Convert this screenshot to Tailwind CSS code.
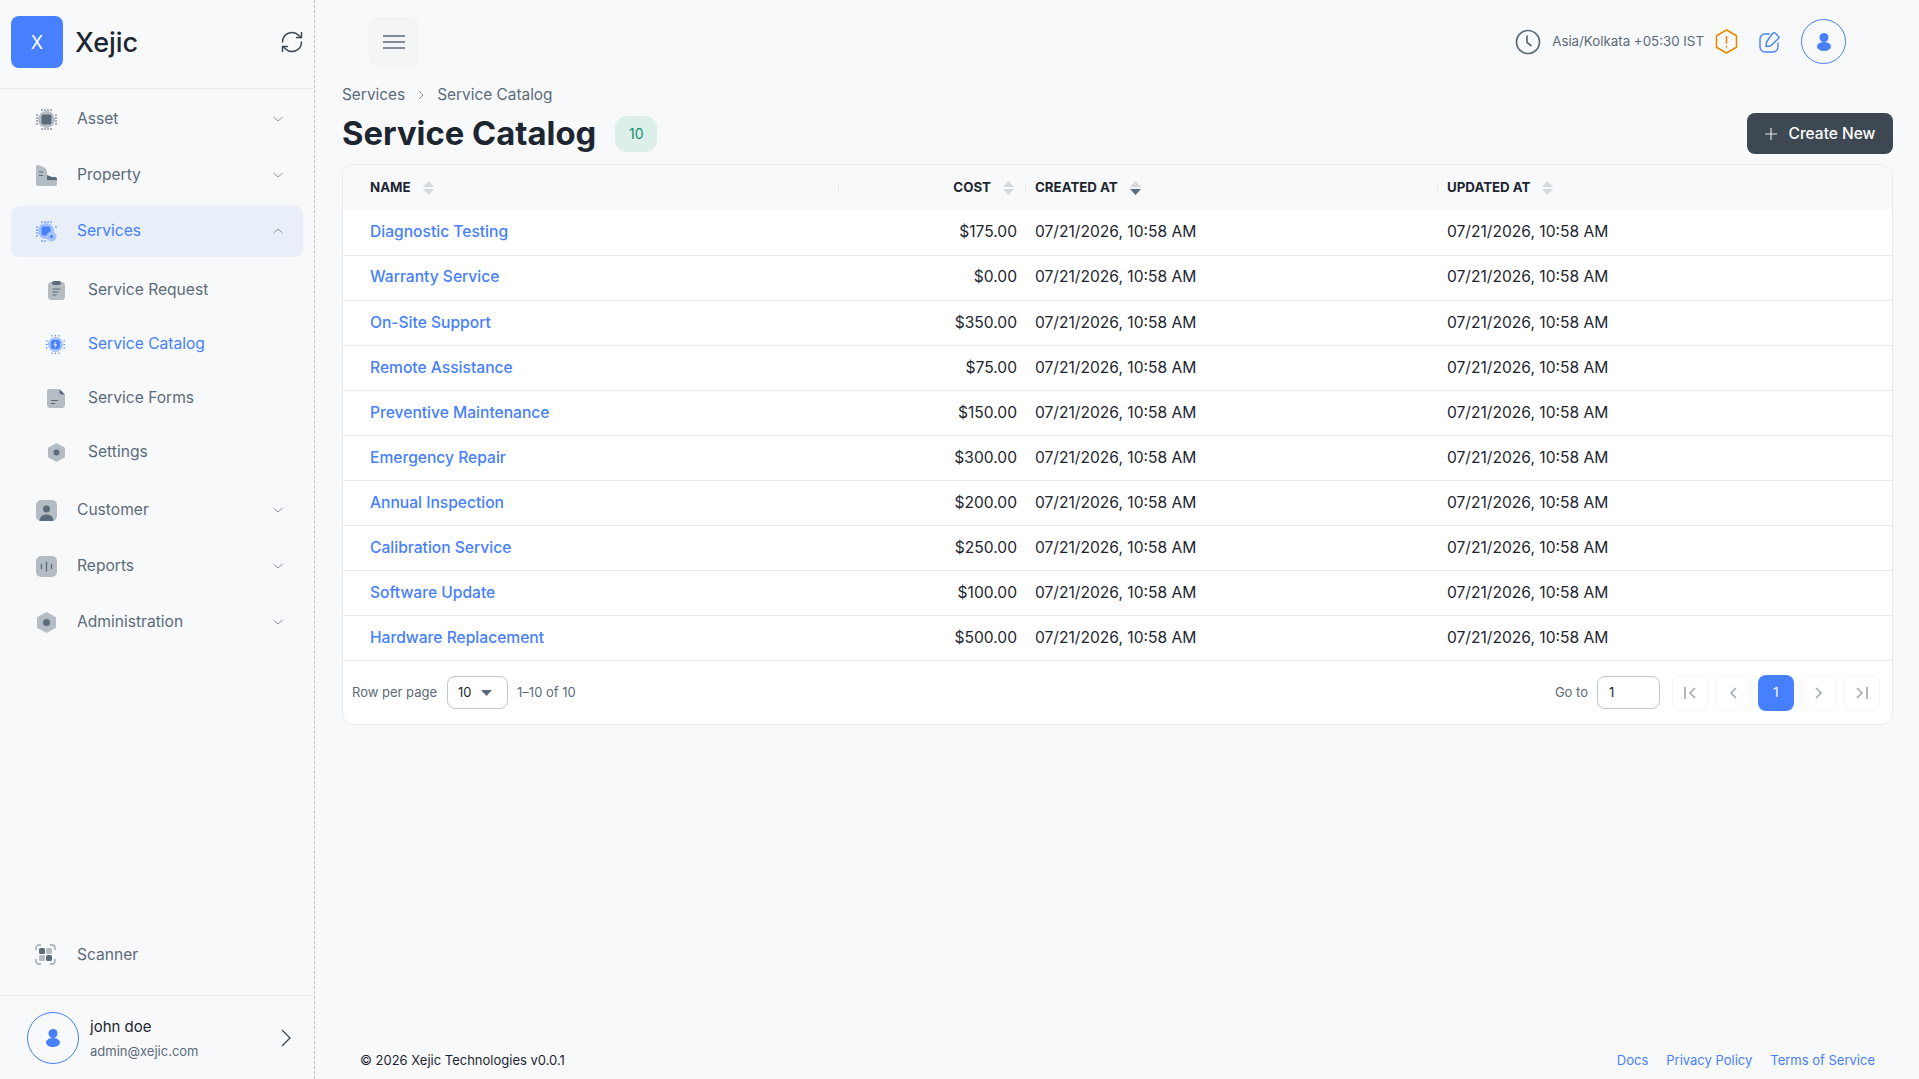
<!DOCTYPE html>
<html lang="en">
<head>
  <meta charset="UTF-8">
  <meta name="viewport" content="width=device-width, initial-scale=1.0">
  <title>Xejic - Service Catalog</title>
  <script src="https://cdn.jsdelivr.net/npm/@tailwindcss/browser@4"></script>
</head>
<body class="bg-[#f8f9fb] text-[#1d2630] font-[Inter,sans-serif] h-screen overflow-hidden flex">
  <!-- sidebar -->
  <aside class="w-[315px] h-screen flex flex-col shrink-0 border-r border-dashed border-[#bec4ca]">
    <div class="h-[89px] shrink-0 flex items-center pl-[11px] pr-[10px] pb-[4px] border-b border-[#e7eaee]">
      <div class="w-[52px] h-[52px] rounded-lg bg-[#4680ff] text-white flex items-center justify-center text-[18px]">X</div>
      <span class="ml-3 text-[27px] leading-none font-medium">Xejic</span>
      <svg class="ml-auto w-[24px] h-[24px] text-[#3e4853]" viewBox="0 0 24 24" fill="none" stroke="currentColor" stroke-width="1.5" stroke-linecap="round" stroke-linejoin="round"><path d="M2.5 12a9.5 9.5 0 0 1 16.2-6.7L21 7.5"/><path d="M21.500 2.500v5h-5"/><path d="M21.500 12a9.500 9.500 0 0 1-16.200 6.700L3 16.500"/><path d="M2.500 21.500v-5h5"/></svg>
    </div>
    <nav class="px-[11px] pt-[5px] flex flex-col gap-[5px] text-[#5b6b79] text-[15.6px]">
      <a class="h-[51px] flex items-center pl-[25px] pr-[19px] pb-[1px]">
        <svg class="w-[21px] h-[21px] mr-[20px]" viewBox="0 0 21 21"><circle cx="10.500" cy="10.500" r="8.500" fill="#b4bcc4"/><rect x="5.500" y="5.500" width="10" height="10" rx="2" fill="#5b6b79"/><path d="M6 0v2M9 0v2M12 0v2M15 0v2M6 19v2M9 19v2M12 19v2M15 19v2M0 6h2M0 9h2M0 12h2M0 15h2M19 6h2M19 9h2M19 12h2M19 15h2" stroke="#5b6b79" stroke-width="1"/></svg>
        Asset
        <svg class="ml-auto w-[12px] h-[12px] text-[#8996a4]" viewBox="0 0 12 12" fill="none" stroke="currentColor"><path d="M1.500 4l4.500 4 4.500-4"/></svg>
      </a>
      <a class="h-[51px] flex items-center pl-[25px] pr-[19px] pb-[1px]">
        <svg class="w-[21px] h-[21px] mr-[20px]" viewBox="0 0 21 21"><path d="M0 2a2 2 0 0 1 2.500-2C6 1 11 3 11 7v14H2a2 2 0 0 1-2-2z" fill="#b4bcc4"/><path d="M3 7h4M3 10.500h4" stroke="#5b6b79" stroke-width="1.200"/><path d="M11 10l5 2 3 0a2 2 0 0 1 2 2v1.500H11z" fill="#5b6b79"/><path d="M11 15.500h10V19a2 2 0 0 1-2 2h-8z" fill="#b4bcc4"/></svg>
        Property
        <svg class="ml-auto w-[12px] h-[12px] text-[#8996a4]" viewBox="0 0 12 12" fill="none" stroke="currentColor"><path d="M1.500 4l4.500 4 4.500-4"/></svg>
      </a>
      <a class="h-[51px] flex items-center pl-[25px] pr-[19px] pb-[1px] rounded-lg bg-[#e9eff9] text-[#4680ff]">
        <svg class="w-[21px] h-[21px] mr-[20px]" viewBox="0 0 21 21"><circle cx="10" cy="10" r="8" fill="#a3c0ff"/><path d="M5.500 7.500a2 2 0 0 1 2-2h5a2 2 0 0 1 2 2v3l-3 4h-4a2 2 0 0 1-2-2z" fill="#4680ff"/><path d="M6 0v2M9 0v2M12 0v2M15 0v2M6 19v2M9 19v2M0 6h2M0 9h2M0 12h2M0 15h2M19 6h2" stroke="#4680ff" stroke-width="1"/><circle cx="15.500" cy="15.500" r="5" fill="#a3c0ff"/><circle cx="15.500" cy="15.500" r="1.500" fill="#4680ff"/></svg>
        Services
        <svg class="ml-auto w-[12px] h-[12px] text-[#8996a4]" viewBox="0 0 12 12" fill="none" stroke="currentColor"><path d="M1.500 8l4.500-4 4.500 4"/></svg>
      </a>
      <div class="flex flex-col my-[1px]">
        <a class="h-[54px] flex items-center pl-[37px]">
          <svg class="w-[17px] h-[19px] mr-[23px]" viewBox="0 0 17 19"><rect y="1" width="17" height="18" rx="3.500" fill="#b4bcc4"/><rect x="4" y="0" width="9" height="4" rx="2" fill="#5b6b79"/><path d="M4.500 8h8M4.500 11h6M4.500 14h4" stroke="#5b6b79" stroke-width="1.200"/></svg>
          Service Request
        </a>
        <a class="h-[54px] flex items-center pl-[35px] text-[#4680ff]">
          <svg class="w-[19px] h-[19px] mr-[23px]" viewBox="0 0 19 19"><circle cx="9.500" cy="9.500" r="7.500" fill="#a3c0ff"/><rect x="5" y="5" width="9" height="9" rx="2.500" fill="#4680ff"/><path d="M10 6.800l-2 3h2.500l-1.500 2.500" stroke="#fff" stroke-width="1" fill="none"/><path d="M6 0v1.500M9.500 0v1.500M13 0v1.500M6 17.500V19M9.500 17.500V19M13 17.500V19M0 6h1.500M0 9.500h1.500M0 13h1.500M17.500 6H19M17.500 9.500H19M17.500 13H19" stroke="#4680ff" stroke-width="1"/></svg>
          Service Catalog
        </a>
        <a class="h-[54px] flex items-center pl-[36px]">
          <svg class="w-[18px] h-[19px] mr-[23px]" viewBox="0 0 18 19"><path d="M3 0h9l6 6v10a3 3 0 0 1-3 3H3a3 3 0 0 1-3-3V3a3 3 0 0 1 3-3z" fill="#b4bcc4"/><path d="M12.500 0L18 5.500h-3.500a2 2 0 0 1-2-2z" fill="#5b6b79"/><path d="M4 11.500h7M4 14.500h4" stroke="#5b6b79" stroke-width="1.200"/></svg>
          Service Forms
        </a>
        <a class="h-[54px] flex items-center pl-[37px]">
          <svg class="w-[17px] h-[19px] mr-[23px]" viewBox="0 0 17 19"><path d="M8.500 0l8.500 4.800v9.400L8.500 19 0 14.200V4.800z" fill="#b4bcc4"/><circle cx="8.500" cy="9.500" r="3" fill="#5b6b79"/></svg>
          Settings
        </a>
      </div>
      <a class="h-[51px] flex items-center pl-[25px] pr-[19px] pb-[1px]">
        <svg class="w-[21px] h-[21px] mr-[20px]" viewBox="0 0 21 21"><rect width="21" height="21" rx="5" fill="#b4bcc4"/><circle cx="10.500" cy="9" r="3.500" fill="#5b6b79"/><path d="M3.500 21c0-4 3-6.500 7-6.500s7 2.500 7 6.500z" fill="#5b6b79"/></svg>
        Customer
        <svg class="ml-auto w-[12px] h-[12px] text-[#8996a4]" viewBox="0 0 12 12" fill="none" stroke="currentColor"><path d="M1.500 4l4.500 4 4.500-4"/></svg>
      </a>
      <a class="h-[51px] flex items-center pl-[25px] pr-[19px] pb-[1px]">
        <svg class="w-[21px] h-[21px] mr-[20px]" viewBox="0 0 21 21"><rect width="21" height="21" rx="5" fill="#b4bcc4"/><path d="M5.500 8.500v4M10.500 6v9M15.500 8.500v4" stroke="#5b6b79" stroke-width="1.300" stroke-linecap="round"/></svg>
        Reports
        <svg class="ml-auto w-[12px] h-[12px] text-[#8996a4]" viewBox="0 0 12 12" fill="none" stroke="currentColor"><path d="M1.500 4l4.500 4 4.500-4"/></svg>
      </a>
      <a class="h-[51px] flex items-center pl-[25px] pr-[19px] pb-[1px]">
        <svg class="w-[21px] h-[21px] mr-[20px]" viewBox="0 0 21 21"><path d="M10.500 0l9.500 5.300v10.400L10.500 21 1 15.700V5.300z" fill="#b4bcc4"/><circle cx="10.500" cy="10.500" r="3.500" fill="#5b6b79"/></svg>
        Administration
        <svg class="ml-auto w-[12px] h-[12px] text-[#8996a4]" viewBox="0 0 12 12" fill="none" stroke="currentColor"><path d="M1.500 4l4.500 4 4.500-4"/></svg>
      </a>
    </nav>
    <a class="mt-auto h-[51px] flex items-center pl-[35px] text-[#5b6b79] text-[15.6px] mb-[15px]">
      <svg class="w-[21px] h-[21px] mr-[21px]" viewBox="0 0 21 21"><path d="M1 6V4a3 3 0 0 1 3-3h2M15 1h2a3 3 0 0 1 3 3v2M20 15v2a3 3 0 0 1-3 3h-2M6 20H4a3 3 0 0 1-3-3v-2" fill="none" stroke="#9aa4ae" stroke-width="1.400"/><rect x="4" y="4" width="6" height="6" rx="1.500" fill="#5b6b79"/><rect x="11" y="4" width="6" height="6" rx="1.500" fill="#b4bcc4"/><rect x="4" y="11" width="6" height="6" rx="1.500" fill="#b4bcc4"/><rect x="11" y="11" width="6" height="6" rx="1.500" fill="#5b6b79"/></svg>
      Scanner
    </a>
    <div class="h-[84px] shrink-0 border-t border-[#e7eaee] flex items-center pl-[27px] pr-[23px]">
      <div class="w-[52px] h-[52px] rounded-full border border-[#4680ff] flex items-center justify-center">
        <svg class="w-[14px] h-[18px]" viewBox="0 0 14 18" fill="#4680ff"><circle cx="7" cy="4.500" r="4.500"/><ellipse cx="7" cy="13.500" rx="7" ry="4.500"/></svg>
      </div>
      <div class="ml-[11px] pt-[2px]">
        <div class="text-[15px] leading-[22px]">john doe</div>
        <div class="text-[13px] leading-[20px] mt-[3px] text-[#5b6b79]">admin@xejic.com</div>
      </div>
      <svg class="ml-auto w-[10px] h-[18px] text-[#3e4853]" viewBox="0 0 10 18" fill="none" stroke="currentColor" stroke-width="1.300"><path d="M1 1l8 8-8 8"/></svg>
    </div>
  </aside>

  <!-- main -->
  <main class="flex-1 min-w-0 h-screen flex flex-col pl-[27px] pr-[26px]">
    <header class="h-[83px] shrink-0 flex items-center">
      <button class="ml-[27px] w-[50px] h-[49px] rounded-lg bg-[#f3f5f7] flex items-center justify-center">
        <svg class="w-[22px] h-[14px] text-[#5b6b79]" viewBox="0 0 22 14" fill="none" stroke="currentColor" stroke-width="1.500"><path d="M0 1h22M0 7h22M0 13h22"/></svg>
      </button>
      <div class="ml-auto flex items-center mr-[47px]">
        <svg class="w-[26px] h-[26px] text-[#5b6b79]" viewBox="0 0 26 26" fill="none" stroke="currentColor" stroke-width="1.700" stroke-linecap="round"><circle cx="13" cy="13" r="11.500"/><path d="M12 7v6.500l4 3"/></svg>
        <span class="ml-[11px] text-[13.3px] text-[#5b6b79]">Asia/Kolkata +05:30 IST</span>
        <svg class="ml-[11px] w-[23px] h-[25px] text-[#e58a00]" viewBox="0 0 23 25" fill="none" stroke="currentColor" stroke-width="1.600" stroke-linejoin="round" stroke-linecap="round"><path d="M11.500 1l10 5.700v11.600l-10 5.700-10-5.700V6.700z"/><path d="M11.500 7.500v6.500M11.500 17.500v.5"/></svg>
        <svg class="ml-[21px] w-[22px] h-[22px] text-[#4680ff]" viewBox="0 0 22 22" fill="none" stroke="currentColor" stroke-width="1.400" stroke-linejoin="round" stroke-linecap="round"><path d="M10 3H6a5 5 0 0 0-5 5v8a5 5 0 0 0 5 5h8a5 5 0 0 0 5-5v-4"/><path d="M16 2l3.500 3.500a1.500 1.500 0 0 1 0 2L11.500 15 7 15.500 7.500 11l6-8.500a1.700 1.700 0 0 1 2.500-.500z"/></svg>
        <div class="ml-[20px] w-[45px] h-[45px] rounded-full border border-[#4680ff] flex items-center justify-center">
          <svg class="w-[14px] h-[18px]" viewBox="0 0 14 18" fill="#4680ff"><circle cx="7" cy="4.500" r="4.500"/><ellipse cx="7" cy="13.500" rx="7" ry="4.500"/></svg>
        </div>
      </div>
    </header>

    <div class="flex items-center h-[22px] mt-[1px] text-[15.4px] text-[#5b6b79]">
      <span>Services</span>
      <svg class="mx-[11px] w-[10px] h-[10px] text-[#8996a4]" viewBox="0 0 10 10" fill="none" stroke="currentColor"><path d="M3 1l4 4-4 4"/></svg>
      <span>Service Catalog</span>
    </div>
    <div class="flex items-center justify-between h-[41px] mt-[7px]">
      <div class="flex items-center">
        <h1 class="text-[32.8px] leading-none font-bold">Service Catalog</h1>
        <span class="ml-[19px] w-[42px] h-[36px] rounded-[12px] bg-[#dcefe9] text-[#178f73] text-[14px] flex items-center justify-center">10</span>
      </div>
      <button class="w-[146px] h-[41px] rounded-lg bg-[#3e4853] text-white text-[15.5px] font-medium flex items-center justify-center gap-[12px]">
        <svg class="w-[12px] h-[12px] text-[#dfe2e5]" viewBox="0 0 12 12" fill="none" stroke="currentColor" stroke-width="1.200"><path d="M6 0v12M0 6h12"/></svg>
        Create New
      </button>
    </div>

    <div class="mt-[10px] border border-[#e7eaee] rounded-[12px] overflow-hidden bg-white">
      <table class="w-full table-fixed text-[15.6px]">
        <colgroup><col class="w-[496px]"><col class="w-[187px]"><col class="w-[412px]"><col></colgroup>
        <thead class="bg-[#f8f9fb]">
          <tr class="h-[45px] text-[13.3px] font-bold">
            <th class="pl-[27px] text-left relative">
              <span class="inline-flex items-center gap-[12px]">NAME
                <svg class="w-[11px] h-[14px]" viewBox="0 0 11 14"><path d="M5.500 0L11 6H0z" fill="#d3d8dc"/><path d="M5.500 14L11 8H0z" fill="#d3d8dc"/></svg>
              </span>
              <span class="absolute right-0 top-[17px] h-[12px] w-px bg-[#e7eaee]"></span>
            </th>
            <th class="pr-[12px] text-right relative">
              <span class="inline-flex items-center gap-[12px]">COST
                <svg class="w-[11px] h-[14px]" viewBox="0 0 11 14"><path d="M5.500 0L11 6H0z" fill="#d3d8dc"/><path d="M5.500 14L11 8H0z" fill="#d3d8dc"/></svg>
              </span>
              <span class="absolute right-0 top-[17px] h-[12px] w-px bg-[#e7eaee]"></span>
            </th>
            <th class="pl-[9px] text-left relative">
              <span class="inline-flex items-center gap-[12px]">CREATED AT
                <svg class="w-[11px] h-[14px]" viewBox="0 0 11 14"><path d="M5.500 0L11 6H0z" fill="#d3d8dc"/><path d="M5.500 14L11 8H0z" fill="#5b6b79"/></svg>
              </span>
              <span class="absolute right-0 top-[17px] h-[12px] w-px bg-[#e7eaee]"></span>
            </th>
            <th class="pl-[9px] text-left">
              <span class="inline-flex items-center gap-[12px]">UPDATED AT
                <svg class="w-[11px] h-[14px]" viewBox="0 0 11 14"><path d="M5.500 0L11 6H0z" fill="#d3d8dc"/><path d="M5.500 14L11 8H0z" fill="#d3d8dc"/></svg>
              </span>
            </th>
          </tr>
        </thead>
        <tbody>
          <tr class="h-[45.100px] border-b border-[#e7eaee]"><td class="pl-[27px] pb-[1px] text-[#4680ff] font-medium">Diagnostic Testing</td><td class="pr-[9px] pb-[1px] text-right">$175.00</td><td class="pl-[9px] pb-[1px]">07/21/2026, 10:58 AM</td><td class="pl-[9px] pb-[1px]">07/21/2026, 10:58 AM</td></tr>
          <tr class="h-[45.100px] border-b border-[#e7eaee]"><td class="pl-[27px] pb-[1px] text-[#4680ff] font-medium">Warranty Service</td><td class="pr-[9px] pb-[1px] text-right">$0.00</td><td class="pl-[9px] pb-[1px]">07/21/2026, 10:58 AM</td><td class="pl-[9px] pb-[1px]">07/21/2026, 10:58 AM</td></tr>
          <tr class="h-[45.100px] border-b border-[#e7eaee]"><td class="pl-[27px] pb-[1px] text-[#4680ff] font-medium">On-Site Support</td><td class="pr-[9px] pb-[1px] text-right">$350.00</td><td class="pl-[9px] pb-[1px]">07/21/2026, 10:58 AM</td><td class="pl-[9px] pb-[1px]">07/21/2026, 10:58 AM</td></tr>
          <tr class="h-[45.100px] border-b border-[#e7eaee]"><td class="pl-[27px] pb-[1px] text-[#4680ff] font-medium">Remote Assistance</td><td class="pr-[9px] pb-[1px] text-right">$75.00</td><td class="pl-[9px] pb-[1px]">07/21/2026, 10:58 AM</td><td class="pl-[9px] pb-[1px]">07/21/2026, 10:58 AM</td></tr>
          <tr class="h-[45.100px] border-b border-[#e7eaee]"><td class="pl-[27px] pb-[1px] text-[#4680ff] font-medium">Preventive Maintenance</td><td class="pr-[9px] pb-[1px] text-right">$150.00</td><td class="pl-[9px] pb-[1px]">07/21/2026, 10:58 AM</td><td class="pl-[9px] pb-[1px]">07/21/2026, 10:58 AM</td></tr>
          <tr class="h-[45.100px] border-b border-[#e7eaee]"><td class="pl-[27px] pb-[1px] text-[#4680ff] font-medium">Emergency Repair</td><td class="pr-[9px] pb-[1px] text-right">$300.00</td><td class="pl-[9px] pb-[1px]">07/21/2026, 10:58 AM</td><td class="pl-[9px] pb-[1px]">07/21/2026, 10:58 AM</td></tr>
          <tr class="h-[45.100px] border-b border-[#e7eaee]"><td class="pl-[27px] pb-[1px] text-[#4680ff] font-medium">Annual Inspection</td><td class="pr-[9px] pb-[1px] text-right">$200.00</td><td class="pl-[9px] pb-[1px]">07/21/2026, 10:58 AM</td><td class="pl-[9px] pb-[1px]">07/21/2026, 10:58 AM</td></tr>
          <tr class="h-[45.100px] border-b border-[#e7eaee]"><td class="pl-[27px] pb-[1px] text-[#4680ff] font-medium">Calibration Service</td><td class="pr-[9px] pb-[1px] text-right">$250.00</td><td class="pl-[9px] pb-[1px]">07/21/2026, 10:58 AM</td><td class="pl-[9px] pb-[1px]">07/21/2026, 10:58 AM</td></tr>
          <tr class="h-[45.100px] border-b border-[#e7eaee]"><td class="pl-[27px] pb-[1px] text-[#4680ff] font-medium">Software Update</td><td class="pr-[9px] pb-[1px] text-right">$100.00</td><td class="pl-[9px] pb-[1px]">07/21/2026, 10:58 AM</td><td class="pl-[9px] pb-[1px]">07/21/2026, 10:58 AM</td></tr>
          <tr class="h-[45.100px] border-b border-[#e7eaee]"><td class="pl-[27px] pb-[1px] text-[#4680ff] font-medium">Hardware Replacement</td><td class="pr-[9px] pb-[1px] text-right">$500.00</td><td class="pl-[9px] pb-[1px]">07/21/2026, 10:58 AM</td><td class="pl-[9px] pb-[1px]">07/21/2026, 10:58 AM</td></tr>
        </tbody>
      </table>
      <div class="h-[63px] flex items-center pl-[9px] pr-[12px] text-[13px] text-[#5b6b79]">
        <span>Row per page</span>
        <div class="ml-[10px] w-[61px] h-[33px] rounded-lg border border-[#bec8d0] flex items-center pl-[10px] text-[#1d2630]">10
          <svg class="ml-[9px] w-[11px] h-[6px]" viewBox="0 0 11 6"><path d="M0 0h11L5.500 6z" fill="#5b6b79"/></svg>
        </div>
        <span class="ml-[9px]">1–10 of 10</span>
        <span class="ml-auto">Go to</span>
        <div class="ml-[9px] w-[63px] h-[33px] rounded-lg border border-[#bec8d0] flex items-center pl-[11px] text-[#1d2630]">1</div>
        <div class="ml-[12px] flex items-center gap-[7px]">
          <button class="w-[36px] h-[36px] rounded-lg border border-[#f3f5f7] flex items-center justify-center text-[#a3abb3]">
            <svg class="w-[12px] h-[12px]" viewBox="0 0 12 12" fill="none" stroke="currentColor" stroke-width="1.700"><path d="M1 0v12M11 1L6 6l5 5"/></svg>
          </button>
          <button class="w-[36px] h-[36px] rounded-lg border border-[#f3f5f7] flex items-center justify-center text-[#a3abb3]">
            <svg class="w-[8px] h-[12px]" viewBox="0 0 8 12" fill="none" stroke="currentColor" stroke-width="1.700"><path d="M7 1L2 6l5 5"/></svg>
          </button>
          <button class="w-[36px] h-[36px] rounded-lg bg-[#4680ff] text-white">1</button>
          <button class="w-[36px] h-[36px] rounded-lg border border-[#f3f5f7] flex items-center justify-center text-[#a3abb3]">
            <svg class="w-[8px] h-[12px]" viewBox="0 0 8 12" fill="none" stroke="currentColor" stroke-width="1.700"><path d="M1 1l5 5-5 5"/></svg>
          </button>
          <button class="w-[36px] h-[36px] rounded-lg border border-[#f3f5f7] flex items-center justify-center text-[#a3abb3]">
            <svg class="w-[12px] h-[12px]" viewBox="0 0 12 12" fill="none" stroke="currentColor" stroke-width="1.700"><path d="M11 0v12M1 1l5 5-5 5"/></svg>
          </button>
        </div>
      </div>
    </div>

    <footer class="mt-auto h-[28px] shrink-0 flex items-start pl-[18px] pr-[18px] text-[13px]">
      <span>© 2026 Xejic Technologies v0.0.1</span>
      <div class="ml-auto flex gap-[18px] text-[#4680ff]">
        <a>Docs</a><a>Privacy Policy</a><a>Terms of Service</a>
      </div>
    </footer>
  </main>
</body>
</html>
